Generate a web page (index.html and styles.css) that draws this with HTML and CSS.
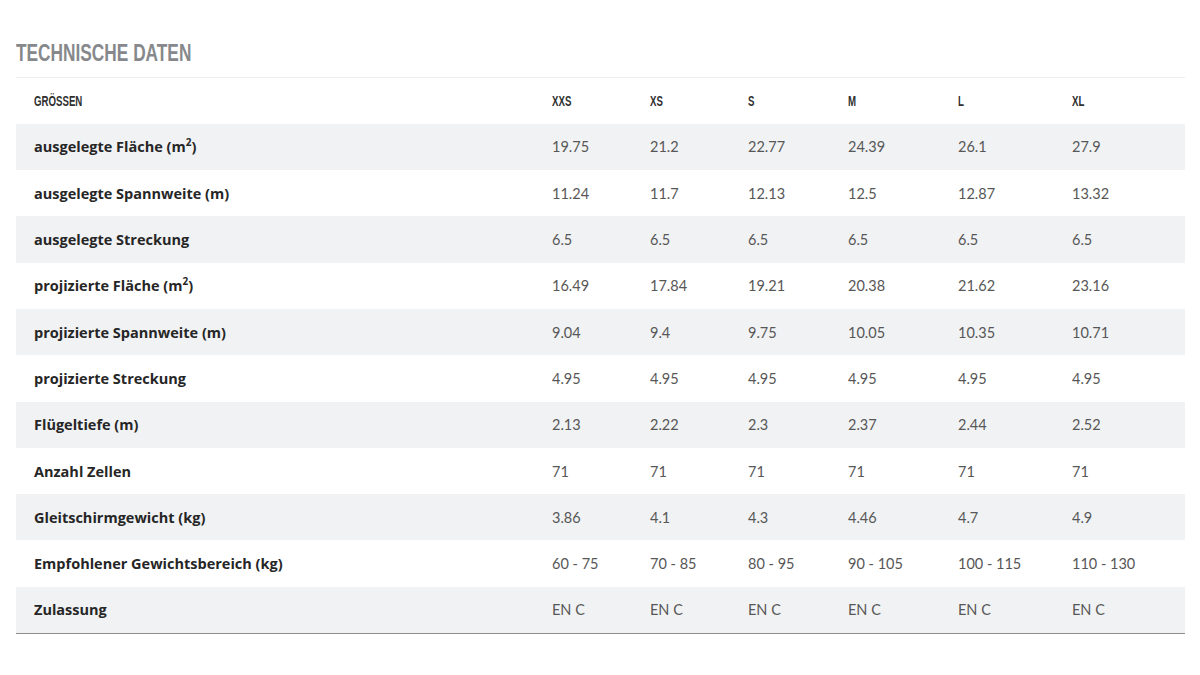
FILE: index.html
```html
<!DOCTYPE html>
<html lang="de">
<head>
<meta charset="utf-8">
<title>Technische Daten</title>
<link rel="stylesheet" href="styles.css">
</head>
<body>
<section class="specs">
  <h2 class="specs-title"><span class="cond">TECHNISCHE DATEN</span></h2>
  <table class="specs-table">
    <colgroup>
      <col class="c-label"><col class="c-xxs"><col class="c-xs"><col class="c-s"><col class="c-m"><col class="c-l"><col class="c-xl">
    </colgroup>
    <thead>
      <tr><th><span class="hd">GRÖSSEN</span></th><th><span class="hd">XXS</span></th><th><span class="hd">XS</span></th><th><span class="hd">S</span></th><th><span class="hd">M</span></th><th><span class="hd">L</span></th><th><span class="hd">XL</span></th></tr>
    </thead>
    <tbody>
      <tr class="alt"><td>ausgelegte Fläche (m<sup>2</sup>)</td><td>19.75</td><td>21.2</td><td>22.77</td><td>24.39</td><td>26.1</td><td>27.9</td></tr>
      <tr><td>ausgelegte Spannweite (m)</td><td>11.24</td><td>11.7</td><td>12.13</td><td>12.5</td><td>12.87</td><td>13.32</td></tr>
      <tr class="alt"><td>ausgelegte Streckung</td><td>6.5</td><td>6.5</td><td>6.5</td><td>6.5</td><td>6.5</td><td>6.5</td></tr>
      <tr><td>projizierte Fläche (m<sup>2</sup>)</td><td>16.49</td><td>17.84</td><td>19.21</td><td>20.38</td><td>21.62</td><td>23.16</td></tr>
      <tr class="alt"><td>projizierte Spannweite (m)</td><td>9.04</td><td>9.4</td><td>9.75</td><td>10.05</td><td>10.35</td><td>10.71</td></tr>
      <tr><td>projizierte Streckung</td><td>4.95</td><td>4.95</td><td>4.95</td><td>4.95</td><td>4.95</td><td>4.95</td></tr>
      <tr class="alt"><td>Flügeltiefe (m)</td><td>2.13</td><td>2.22</td><td>2.3</td><td>2.37</td><td>2.44</td><td>2.52</td></tr>
      <tr><td>Anzahl Zellen</td><td>71</td><td>71</td><td>71</td><td>71</td><td>71</td><td>71</td></tr>
      <tr class="alt"><td>Gleitschirmgewicht (kg)</td><td>3.86</td><td>4.1</td><td>4.3</td><td>4.46</td><td>4.7</td><td>4.9</td></tr>
      <tr><td>Empfohlener Gewichtsbereich (kg)</td><td>60 - 75</td><td>70 - 85</td><td>80 - 95</td><td>90 - 105</td><td>100 - 115</td><td>110 - 130</td></tr>
      <tr class="alt"><td>Zulassung</td><td>EN C</td><td>EN C</td><td>EN C</td><td>EN C</td><td>EN C</td><td>EN C</td></tr>
    </tbody>
  </table>
</section>
</body>
</html>
```

FILE: styles.css
```css
html, body {
  margin: 0;
  padding: 0;
  background: #ffffff;
}

.specs {
  padding: 38px 15px 0 16px;
}

.specs-title {
  margin: 0;
  height: 39px;
  font-family: "Liberation Sans", Arial, sans-serif;
  font-weight: bold;
  font-size: 24px;
  line-height: 30px;
  color: #86888b;
  white-space: nowrap;
}

.cond {
  display: inline-block;
  transform: scaleX(0.72);
  transform-origin: left center;
}

.specs-table {
  width: 1169px;
  border-collapse: collapse;
  table-layout: fixed;
  font-family: "Lato", "Liberation Sans", sans-serif;
  font-size: 14.5px;
  border-top: 1px solid #ececec;
  border-bottom: 1px solid #8e8e8e;
}

.c-label { width: 518px; }
.c-xxs { width: 98px; }
.c-xs { width: 98px; }
.c-s { width: 100px; }
.c-m { width: 110px; }
.c-l { width: 114px; }
.c-xl { width: 131px; }

.specs-table tr {
  height: 46.3px;
}

.specs-table th,
.specs-table td {
  padding: 0 0 0 18px;
  text-align: left;
  vertical-align: middle;
}

.specs-table th {
  font-family: "Liberation Sans", Arial, sans-serif;
  font-weight: bold;
  font-size: 14px;
  color: #303030;
  white-space: nowrap;
}

.hd {
  display: inline-block;
  transform: scaleX(0.69);
  transform-origin: left center;
}

.specs-table td {
  color: #575757;
  font-weight: normal;
}

.specs-table td:first-child {
  font-family: "Open Sans", "Lato", sans-serif;
  color: #262626;
  font-weight: bold;
  font-size: 14.5px;
}

.specs-table tr.alt td {
  background: #f1f2f4;
}

.specs-table sup {
  font-size: 10px;
  line-height: 0;
  vertical-align: 6px;
}
```
